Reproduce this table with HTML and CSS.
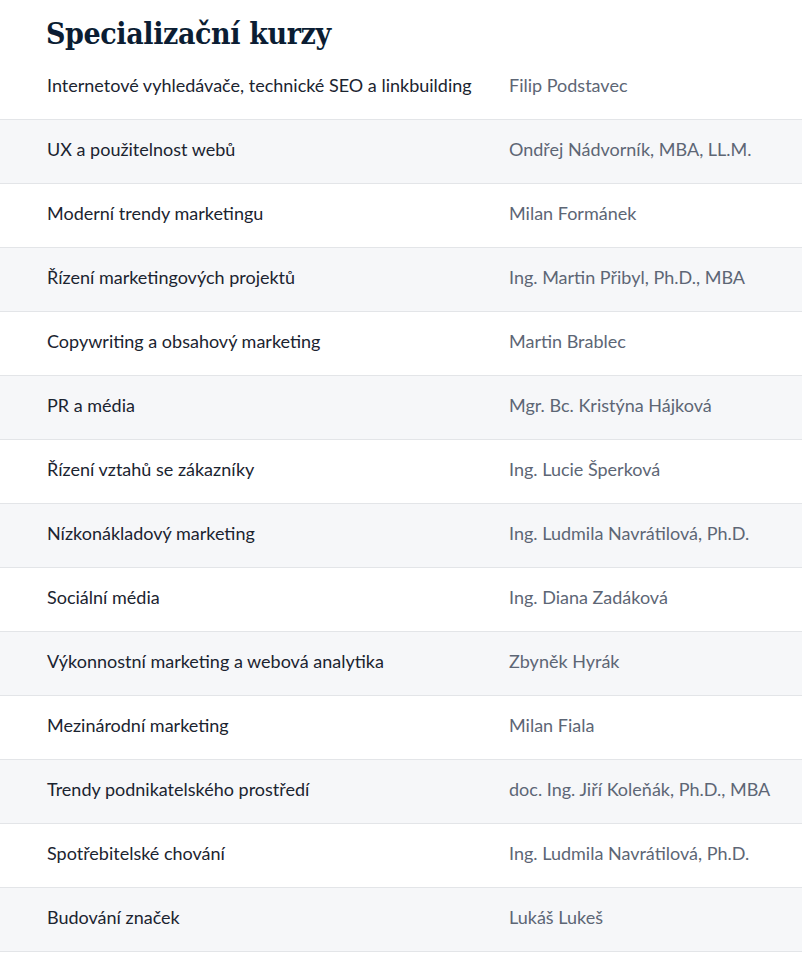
FILE: index.html
```html
<!DOCTYPE html>
<html lang="cs">
<head>
<meta charset="utf-8">
<title>Specializační kurzy</title>
<link rel="stylesheet" href="styles.css">
</head>
<body>
<section class="courses">
  <h2 class="title">Specializační kurzy</h2>
  <div class="list">
    <div class="row"><span class="course">Internetové vyhledávače, technické SEO a linkbuilding</span><span class="lector">Filip Podstavec</span></div>
    <div class="row"><span class="course">UX a použitelnost webů</span><span class="lector">Ondřej Nádvorník, MBA, LL.M.</span></div>
    <div class="row"><span class="course">Moderní trendy marketingu</span><span class="lector">Milan Formánek</span></div>
    <div class="row"><span class="course">Řízení marketingových projektů</span><span class="lector">Ing. Martin Přibyl, Ph.D., MBA</span></div>
    <div class="row"><span class="course">Copywriting a obsahový marketing</span><span class="lector">Martin Brablec</span></div>
    <div class="row"><span class="course">PR a média</span><span class="lector">Mgr. Bc. Kristýna Hájková</span></div>
    <div class="row"><span class="course">Řízení vztahů se zákazníky</span><span class="lector">Ing. Lucie Šperková</span></div>
    <div class="row"><span class="course">Nízkonákladový marketing</span><span class="lector">Ing. Ludmila Navrátilová, Ph.D.</span></div>
    <div class="row"><span class="course">Sociální média</span><span class="lector">Ing. Diana Zadáková</span></div>
    <div class="row"><span class="course">Výkonnostní marketing a webová analytika</span><span class="lector">Zbyněk Hyrák</span></div>
    <div class="row"><span class="course">Mezinárodní marketing</span><span class="lector">Milan Fiala</span></div>
    <div class="row"><span class="course">Trendy podnikatelského prostředí</span><span class="lector">doc. Ing. Jiří Koleňák, Ph.D., MBA</span></div>
    <div class="row"><span class="course">Spotřebitelské chování</span><span class="lector">Ing. Ludmila Navrátilová, Ph.D.</span></div>
    <div class="row"><span class="course">Budování značek</span><span class="lector">Lukáš Lukeš</span></div>
  </div>
</section>
</body>
</html>
```
FILE: styles.css
```css
html, body {
  margin: 0;
  padding: 0;
  background: #ffffff;
}
body {
  font-family: "Lato", "Liberation Sans", sans-serif;
  color: #1b2430;
}
.title {
  margin: 0;
  height: 56px;
  box-sizing: border-box;
  padding: 14px 0 0 46px;
  font-family: "DejaVu Serif", "Liberation Serif", serif;
  font-stretch: condensed;
  font-weight: bold;
  font-size: 30px;
  line-height: 40px;
  color: #0b1d33;
  letter-spacing: -0.4px;
}
.list {
  display: flex;
  flex-direction: column;
}
.row {
  display: flex;
  align-items: center;
  height: 64px;
  box-sizing: border-box;
  border-bottom: 1px solid #e3e5e8;
  padding: 0 0 5px 47px;
  font-size: 18px;
}
.row:nth-child(even) {
  background: #f6f7f9;
}
.course {
  width: 462px;
  flex: none;
  color: #1b2430;
}
.lector {
  color: #5d6675;
}
```
